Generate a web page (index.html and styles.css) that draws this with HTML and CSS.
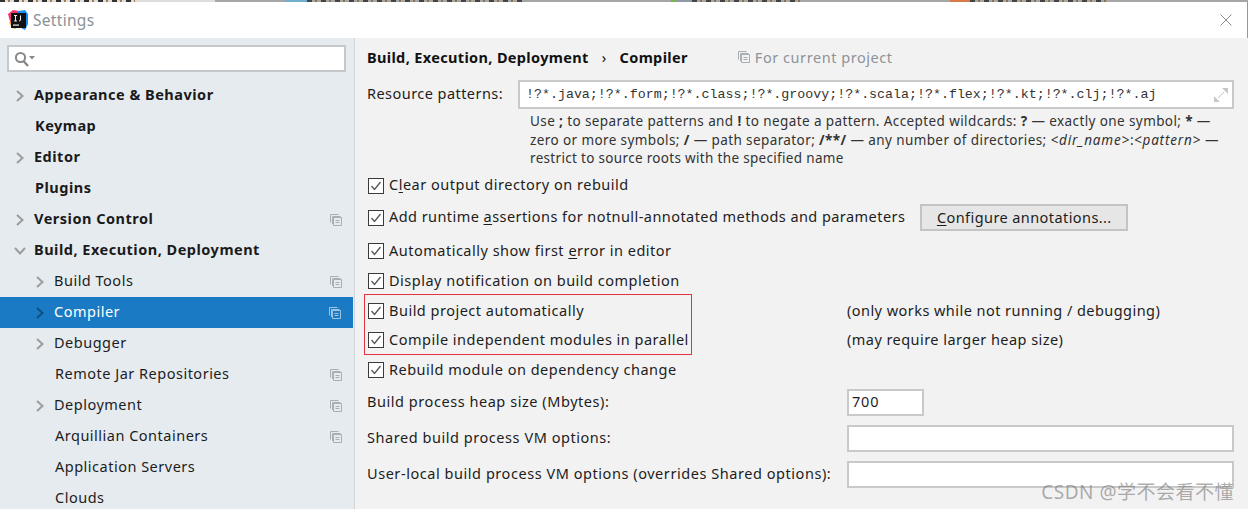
FILE: index.html
```html
<!DOCTYPE html>
<html lang="en">
<head>
  <meta charset="UTF-8" />
  <title>Settings</title>
  <link rel="stylesheet" href="styles.css">
</head>
<body>
  <svg width="0" height="0" class="defs">
    <symbol id="chev" viewBox="0 0 10 14"><path d="M2 2l5.500 5-5.500 5" fill="none" stroke="currentColor" stroke-width="2"/></symbol>
    <symbol id="copy" viewBox="0 0 12 12"><path d="M.5 8.500v-8h8M2.500 10V2.500h8" fill="none" stroke="currentColor"/><path d="M3.500 3.500h8v8h-8zM5.500 6.500h4M5.500 8.500h4" fill="none" stroke="currentColor"/></symbol>
    <symbol id="check" viewBox="0 0 16 16"><rect x=".5" y=".5" width="15" height="15" fill="#fff" stroke="#3a3a3a"/><path d="M3.500 8l3 3.500 6-7.500" fill="none" stroke="#555" stroke-width="1.300"/></symbol>
  </svg>

  <!-- sliver of the window behind the dialog -->
  <div class="topstrip">
    <i class="frag light"></i><i class="frag gap1"></i><i class="frag blue"></i><i class="frag dark w215"></i><i class="frag gap2"></i>
    <i class="frag green"></i><i class="frag dark w110"></i><i class="frag gap3"></i><i class="frag orange"></i><i class="frag dark w140"></i>
  </div>
  <header class="titlebar">
    <svg class="logo" width="20" height="20" viewBox="0 0 20 20">
      <path d="M0 4l5-4 6 1v8l-8 6z" fill="#f5346b"/>
      <path d="M10 1l7-1 3 4v10l-3 6-6-3z" fill="#1b8ff2"/>
      <path d="M1 12l3 6 4 1-2-8z" fill="#f79a2e"/>
      <rect x="3" y="3" width="15" height="15" fill="#111"/>
      <rect x="5" y="14.500" width="6" height="1.200" fill="#eee"/>
      <path d="M6 5.500h3M7.500 5.500v5.500M6 11h3M12.500 5.500v4.500q0 1-1.500 1" fill="none" stroke="#eee" stroke-width="1"/>
    </svg>
    <span class="title">Settings</span>
    <svg class="close" width="12" height="12" viewBox="0 0 12 12"><path d="M.5 .5l11 11M11.500 .5l-11 11" stroke="#8a8a8a" fill="none"/></svg>
  </header>

  <main class="dialog">
    <aside class="sidebar">
      <div class="search">
        <svg width="24" height="16" viewBox="0 0 24 16">
          <circle cx="6.500" cy="6.500" r="4.600" fill="none" stroke="#888" stroke-width="2"/>
          <path d="M9.500 10l4.500 5" stroke="#888" stroke-width="2.400"/>
          <path d="M15 5h6l-3 3.500z" fill="#888"/>
        </svg>
      </div>
      <nav class="tree">
        <div class="row top"><svg class="arrow"><use href="#chev"/></svg><span>Appearance &amp; Behavior</span></div>
        <div class="row top"><i class="noarrow"></i><span>Keymap</span></div>
        <div class="row top"><svg class="arrow"><use href="#chev"/></svg><span>Editor</span></div>
        <div class="row top"><i class="noarrow"></i><span>Plugins</span></div>
        <div class="row top"><svg class="arrow"><use href="#chev"/></svg><span>Version Control</span><svg class="copy"><use href="#copy"/></svg></div>
        <div class="row top"><svg class="arrow open"><use href="#chev"/></svg><span>Build, Execution, Deployment</span></div>
        <div class="row sub"><svg class="arrow"><use href="#chev"/></svg><span>Build Tools</span><svg class="copy"><use href="#copy"/></svg></div>
        <div class="row sub selected"><svg class="arrow"><use href="#chev"/></svg><span>Compiler</span><svg class="copy"><use href="#copy"/></svg></div>
        <div class="row sub"><svg class="arrow"><use href="#chev"/></svg><span>Debugger</span></div>
        <div class="row sub"><i class="noarrow"></i><span>Remote Jar Repositories</span><svg class="copy"><use href="#copy"/></svg></div>
        <div class="row sub"><svg class="arrow"><use href="#chev"/></svg><span>Deployment</span><svg class="copy"><use href="#copy"/></svg></div>
        <div class="row sub"><i class="noarrow"></i><span>Arquillian Containers</span><svg class="copy"><use href="#copy"/></svg></div>
        <div class="row sub"><i class="noarrow"></i><span>Application Servers</span></div>
        <div class="row sub"><i class="noarrow"></i><span>Clouds</span></div>
      </nav>
    </aside>

    <section class="content">
      <div class="crumbs">
        <b>Build, Execution, Deployment</b>
        <span class="sep">›</span>
        <b>Compiler</b>
        <svg class="copy small"><use href="#copy"/></svg>
        <span class="scope">For current project</span>
      </div>

      <div class="patterns">
        <label>Resource patterns:</label>
        <div class="field mono">
          <span>!?*.java;!?*.form;!?*.class;!?*.groovy;!?*.scala;!?*.flex;!?*.kt;!?*.clj;!?*.aj</span>
          <svg width="16" height="16" viewBox="0 0 16 16"><path d="M9 1h6v6zM1 9v6h6z" fill="#c8c8c8"/><path d="M5 11l6-6" stroke="#c8c8c8"/></svg>
        </div>
      </div>
      <p class="help">
        Use <b>;</b> to separate patterns and <b>!</b> to negate a pattern. Accepted wildcards: <b>?</b> — exactly one symbol; <b>*</b> —<br>
        zero or more symbols; <b>/</b> — path separator; <b>/**/</b> — any number of directories; <em>&lt;dir_name&gt;</em>:<em>&lt;pattern&gt;</em> —<br>
        <span class="lastline">restrict to source roots with the specified name</span>
      </p>

      <div class="check r-clear"><svg class="box"><use href="#check"/></svg><span>C<u>l</u>ear output directory on rebuild</span></div>
      <div class="check r-add">
        <svg class="box"><use href="#check"/></svg><span>Add runtime <u>a</u>ssertions for notnull-annotated methods and parameters</span>
        <button class="btn"><u>C</u>onfigure annotations...</button>
      </div>
      <div class="check r-first"><svg class="box"><use href="#check"/></svg><span>Automatically show first <u>e</u>rror in editor</span></div>
      <div class="check r-std"><svg class="box"><use href="#check"/></svg><span>Display notification on build completion</span></div>
      <div class="check r-std split"><div class="left"><svg class="box"><use href="#check"/></svg><span>Build project automatically</span></div><span class="note">(only works while not running / debugging)</span></div>
      <div class="check r-std split"><div class="left"><svg class="box"><use href="#check"/></svg><span>Compile independent modules in parallel</span></div><span class="note">(may require larger heap size)</span></div>
      <div class="check r-std"><svg class="box"><use href="#check"/></svg><span>Rebuild module on dependency change</span></div>

      <div class="opt"><label>Build process heap size (Mbytes):</label><div class="field short">700</div></div>
      <div class="opt"><label>Shared build process VM options:</label><div class="field wide"></div></div>
      <div class="opt"><label>User-local build process VM options (overrides Shared options):</label><div class="field wide"></div></div>

      <div class="marker"></div>
    </section>
  </main>
  <div class="watermark">CSDN @学不会看不懂</div>
</body>
</html>
```

FILE: styles.css
```css
* {
  margin: 0;
  padding: 0;
  box-sizing: border-box;
}
html, body {
  height: 509px;
  overflow: hidden;
}
body {
  font-family: 'Noto Sans', 'Noto Sans CJK SC', sans-serif;
  font-size: 14.5px;
  color: #1d1d1d;
  background: #f2f2f2;
  position: relative;
}
u {
  text-underline-offset: 2px;
}
.defs {
  position: absolute;
}
.topstrip {
  height: 2px;
  background: linear-gradient(90deg, #ddd 215px, #a6a6a6 215px);
  display: flex;
}
.frag {
  display: block;
  flex: none;
}
.light {
  width: 135px;
  background: repeating-linear-gradient(90deg, #333 0 5px, #ddd 5px 8px, #a67c45 8px 10px, #ddd 10px 14px);
}
.gap1 {
  width: 150px;
}
.blue {
  width: 22px;
  background: #6fb0cf;
}
.dark {
  background: repeating-linear-gradient(90deg, #444 0 5px, #a6a6a6 5px 8px, #8a7150 8px 10px, #a6a6a6 10px 14px);
}
.w215 {
  width: 215px;
}
.gap2 {
  width: 149px;
}
.green {
  width: 21px;
  background: linear-gradient(90deg, #7ab648 5px, #8f9aa6 5px);
}
.w110 {
  width: 110px;
}
.gap3 {
  width: 148px;
}
.orange {
  width: 20px;
  background: #d9794a;
}
.w140 {
  width: 140px;
}
.titlebar {
  height: 36px;
  background: #fff;
  display: flex;
  align-items: center;
  padding: 0 15px 0 8px;
  border-right: 1px solid #999;
}
.logo {
  margin-right: 5px;
}
.title {
  color: #8b9299;
  font-size: 15.5px;
  letter-spacing: .3px;
}
.close {
  margin-left: auto;
}
.dialog {
  display: flex;
  height: 471px;
}
.sidebar {
  width: 355px;
  flex: none;
  background: #e6ebf0;
  border-right: 1px solid #d2d5d8;
  padding-top: 7px;
}
.search {
  height: 27px;
  margin: 0 8px 0 7px;
  background: #fff;
  border: 2px solid #c6c9cc;
  display: flex;
  align-items: center;
  padding-left: 5px;
}
.tree {
  margin-top: 8px;
}
.row {
  height: 31px;
  display: flex;
  align-items: center;
  letter-spacing: .5px;
}
.row span {
  margin-bottom: 4px;
}
.row.top {
  padding-left: 15px;
  font-weight: 700;
  color: #1a1a1a;
}
.row.sub {
  padding-left: 35px;
}
.arrow {
  width: 10px;
  height: 14px;
  margin-right: 9px;
  color: #9c9c9c;
  flex: none;
}
.arrow.open {
  transform: rotate(90deg);
}
.noarrow {
  width: 20px;
  flex: none;
}
.copy {
  width: 12px;
  height: 12px;
  margin-left: auto;
  margin-right: 12px;
  color: #a9aeb3;
  flex: none;
}
.row.selected {
  background: #1a7bc4;
  color: #fff;
  margin-right: 1px;
}
.row.selected .arrow {
  color: #0f4f82;
}
.row.selected .copy {
  color: #9fc4e0;
}
.content {
  flex: 1;
  position: relative;
  padding: 9px 14px 0 13px;
}
.crumbs {
  height: 24px;
  padding: 0 0 4px;
  margin-left: -1px;
  display: flex;
  align-items: center;
  letter-spacing: .35px;
  color: #111;
}
.crumbs .sep {
  margin: 0 13px;
}
.copy.small {
  margin: 0 5px 0 50px;
}
.scope {
  color: #8e9398;
  letter-spacing: .55px;
}
.patterns {
  display: flex;
  align-items: center;
  margin: 9px 0 0 -1px;
}
.patterns label {
  width: 151px;
  letter-spacing: .45px;
  margin-bottom: 4px;
}
.field {
  background: #fff;
  border: 2px solid #c9c9c9;
}
.field.mono {
  flex: 1;
  height: 29px;
  display: flex;
  align-items: center;
  justify-content: space-between;
  padding: 0 3px 0 6px;
  font-family: 'Liberation Mono', monospace;
  font-size: 13.3px;
  color: #333;
}
.help {
  margin: 3px 0 0 162px;
  font-size: 13.5px;
  line-height: 18.5px;
  letter-spacing: .4px;
  color: #333;
  white-space: nowrap;
}
.help em {
  letter-spacing: .8px;
}
.lastline {
  letter-spacing: .32px;
}
.check {
  display: flex;
  align-items: center;
  letter-spacing: .5px;
  white-space: nowrap;
}
.check span {
  margin-bottom: 4px;
}
.box {
  width: 16px;
  height: 16px;
  margin-right: 5px;
  flex: none;
}
.r-clear {
  height: 30px;
  margin-top: 3px;
}
.r-add {
  height: 34px;
  letter-spacing: .44px;
}
.r-first {
  height: 33px;
  margin-bottom: -1px;
}
.r-first span, .r-std span {
  margin-bottom: 2px;
}
.r-std {
  height: 29.500px;
}
.split .left {
  display: flex;
  align-items: center;
  width: 479px;
}
.split .note {
  letter-spacing: .45px;
}
.btn {
  margin-left: 15px;
  width: 208px;
  height: 27px;
  padding-bottom: 2px;
  background: #e6e6e6;
  border: 2px solid #c4c4c4;
  font: inherit;
  letter-spacing: .42px;
  color: #1d1d1d;
}
.opt {
  display: flex;
  align-items: center;
  height: 36px;
  letter-spacing: .55px;
  white-space: nowrap;
}
.opt label {
  width: 480px;
  margin: 0 0 3px -1px;
  flex: none;
}
.opt .field {
  height: 27px;
}
.field.short {
  width: 77px;
  padding-left: 3px;
  line-height: 21px;
  letter-spacing: .8px;
}
.field.wide {
  flex: 1;
}
/* red annotation drawn over the two rows */
.marker {
  position: absolute;
  left: 9px;
  top: 256px;
  width: 328px;
  height: 61px;
  border: 1px solid #e2343f;
}
.watermark {
  position: absolute;
  right: 14px;
  bottom: 4px;
  font-size: 19px;
  color: rgba(120,120,120,.6);
  letter-spacing: .5px;
}
```
